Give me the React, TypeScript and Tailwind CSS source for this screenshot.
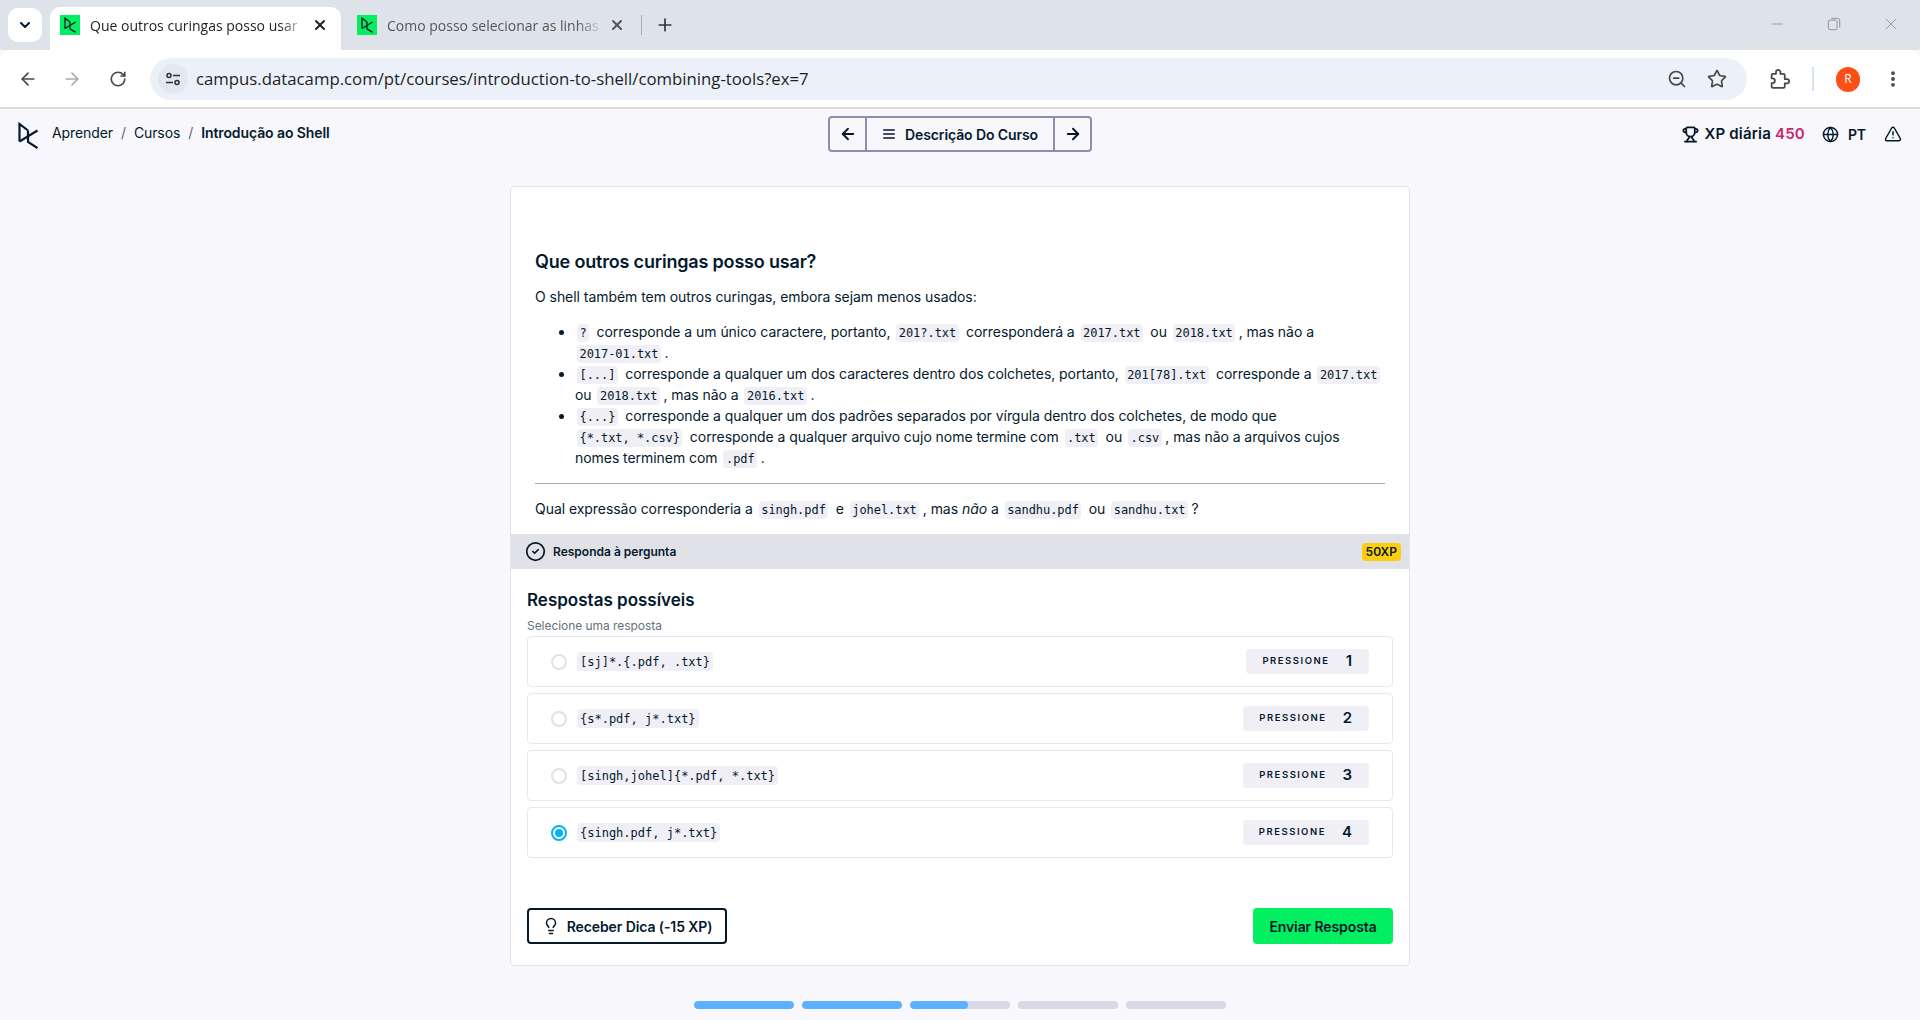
import React from "react";
import { ArrowLeft, ArrowRight, AlignJustify, Trophy, Globe, TriangleAlert, CircleCheck, Lightbulb, X, Plus, Minus, RotateCw, Star, ZoomOut, EllipsisVertical, ChevronDown } from "lucide-react";

const Logo = ({ className = "" }: { className?: string }) => (
  <svg viewBox="0 0 20 27" className={className} fill="none" stroke="currentColor" strokeWidth="2.2" strokeLinejoin="miter">
    <path d="M1.5 19.5V2l8.5 6.5" />
    <path d="M1.5 19.5 19.5 8.5" />
    <path d="M10 8.5v6M10 14.5V20l9.5 6" />
  </svg>
);

const Fav = () => (
  <div className="w-5 h-5 bg-[#03ef62] flex items-center justify-center shrink-0 text-[#05192d]">
    <Logo className="w-3 h-4" />
  </div>
);

const C = ({ children }: { children: React.ReactNode }) => (
  <code className="bg-[#efeff5] rounded-[4px] px-[2.5px] py-[2px] leading-[14px] text-[12px] text-[#05192d] font-['DejaVu_Sans_Mono',monospace] ml-[2px] mr-[3.5px] whitespace-pre">{children}</code>
);

const options = ["[sj]*.{.pdf, .txt}", "{s*.pdf, j*.txt}", "[singh,johel]{*.pdf, *.txt}", "{singh.pdf, j*.txt}"];

export default function App() {
  return (
    <div className="h-[1020px] overflow-hidden bg-[#f7f7fc] text-[#05192d] font-['Inter',sans-serif] flex flex-col">
      {/* tab strip */}
      <div className="h-[50px] bg-[#dee3ea] flex items-end shrink-0 font-['Open_Sans',sans-serif]">
        <div className="w-[34px] h-[34px] ml-2 mb-2 bg-white rounded-[10px] flex items-center justify-center"><ChevronDown size={16} strokeWidth={3} /></div>
        <div className="w-[291px] h-[43px] ml-2 bg-white rounded-t-[10px] flex items-center pl-[10px] pb-[7px]">
          <Fav />
          <span className="ml-[10px] w-[216px] overflow-hidden whitespace-nowrap text-[14px] text-[#222] [mask-image:linear-gradient(to_right,black_88%,transparent)]">Que outros curingas posso usar</span>
          <X size={16} strokeWidth={3} className="ml-[6px] text-[#222]" />
        </div>
        <div className="w-[340px] h-[43px] flex items-center pl-4 pb-[7px]">
          <Fav />
          <span className="ml-[10px] w-[216px] overflow-hidden whitespace-nowrap text-[14px] text-[#555] [mask-image:linear-gradient(to_right,black_88%,transparent)]">Como posso selecionar as linhas</span>
          <X size={16} strokeWidth={3} className="ml-[6px] text-[#555]" />
          <div className="w-px h-5 bg-[#aaa] ml-4" />
          <Plus size={20} strokeWidth={2} className="ml-[13px] text-[#333]" />
        </div>
        <div className="ml-auto flex items-center h-[50px] pb-[2px] text-[#8a8a8a]">
          <Minus size={18} strokeWidth={1} />
          <svg viewBox="0 0 16 16" className="w-[14px] h-[14px] ml-[41px]" fill="none" stroke="currentColor"><rect x="1.5" y="3.5" width="10" height="11" rx="2" /><path d="M5 1.5h7a2.5 2.5 0 0 1 2.5 2.5v8" /></svg>
          <X size={20} strokeWidth={1} className="ml-[40px] mr-[19px]" />
        </div>
      </div>
      {/* toolbar */}
      <div className="h-[59px] pt-2 pb-[7px] bg-white border-b-2 border-[#dcdcdc] flex items-center shrink-0 text-[#474747] font-['Open_Sans',sans-serif] rounded-t-[10px]">
        <ArrowLeft size={20} className="ml-[18px]" />
        <ArrowRight size={20} className="ml-6 text-[#a9a9a9]" />
        <RotateCw size={18} strokeWidth={2.2} className="ml-[27px]" />
        <div className="ml-[23px] w-[1597px] h-[42px] bg-[#ecf1f9] rounded-full flex items-center">
          <div className="ml-2 w-[30px] h-[30px] rounded-full bg-[#e3e8f0] flex flex-col items-center justify-center gap-[3px]">
            <svg viewBox="0 0 16 14" className="w-[16px] h-[14px]" fill="none" stroke="#333" strokeWidth="1.6"><circle cx="4" cy="3.5" r="2" /><path d="M8 3.5h7M1 10.5h7" /><circle cx="12" cy="10.5" r="2" /></svg>
          </div>
          <span className="ml-2 text-[16.75px] text-[#1f1f1f]">campus.datacamp.com/pt/courses/introduction-to-shell/combining-tools?ex=7</span>
          <ZoomOut size={20} className="ml-auto" />
          <Star size={20} className="ml-5 mr-5" />
        </div>
        <svg viewBox="0 0 24 24" className="ml-[22px] w-[21px] h-[21px]" fill="none" stroke="currentColor" strokeWidth="2" strokeLinejoin="round">
          <path d="M20.5 11.5H18V7a1.5 1.5 0 0 0-1.5-1.5H13V3.5a2.5 2.5 0 0 0-5 0v2H4.5A1.5 1.5 0 0 0 3 7v3.8h1a2.7 2.7 0 0 1 0 5.4H3V20a1.5 1.5 0 0 0 1.5 1.5h12A1.5 1.5 0 0 0 18 20v-3.5h2.5a2.5 2.5 0 0 0 0-5z" />
        </svg>
        <div className="ml-[22px] w-[2px] h-6 bg-[#d3e3fd]" />
        <div className="ml-[22px] w-6 h-[25px] rounded-full bg-[#fb5119] text-white text-[12px] flex items-center justify-center">R</div>
        <EllipsisVertical size={20} strokeWidth={2.6} className="ml-[23px]" />
      </div>
      {/* app header */}
      <header className="relative h-[50px] shrink-0 flex items-center px-[18px] text-[14px] pb-[3px] tracking-[-0.1px]">
        <Logo className="w-5 h-[27px] mt-[6px]" />
        <nav className="ml-[14px] flex items-center">
          <span>Aprender</span>
          <span className="mx-[8px] text-[#5d6a77]">/</span>
          <span>Cursos</span>
          <span className="mx-[8px] text-[#5d6a77]">/</span>
          <span className="font-semibold">Introdução ao Shell</span>
        </nav>
        <div className="absolute left-[828px] top-[7px] h-9 w-[264px] border-2 border-[#8a8fad] rounded-[4px] flex items-center font-semibold">
          <div className="w-[35px] h-full flex items-center justify-center"><ArrowLeft size={18} strokeWidth={2.5} /></div>
          <div className="flex-1 h-full border-x-2 border-[#8a8fad] flex items-center justify-center gap-[9px]"><AlignJustify size={14} strokeWidth={2.5} /><span>Descrição Do Curso</span></div>
          <div className="w-[35px] h-full flex items-center justify-center"><ArrowRight size={18} strokeWidth={2.5} /></div>
        </div>
        <div className="ml-auto mt-[3px] flex items-center font-semibold">
          <Trophy size={17} strokeWidth={2.5} />
          <span className="ml-[5px] text-[15px] tracking-[0.2px]">XP diária <span className="text-[#c7286f]">450</span></span>
          <Globe size={17} strokeWidth={2} className="ml-[17px]" />
          <span className="ml-[9px]">PT</span>
          <TriangleAlert size={18} strokeWidth={2} className="ml-[18px]" />
        </div>
      </header>
      {/* card */}
      <main className="w-[900px] ml-[510px] h-[780px] mt-[27px] shrink-0 bg-white border border-[#e3e3ec] rounded-[4px] flex flex-col">
        <div className="px-6 pt-[61px] text-[14px] leading-[21px] tracking-[-0.05px]">
          <h1 className="text-[18px] leading-[28px] font-semibold tracking-[-0.18px]">Que outros curingas posso usar?</h1>
          <p className="mt-[10px]">O shell também tem outros curingas, embora sejam menos usados:</p>
          <ul className="list-disc pl-10 mt-[14px]">
            <li><C>?</C> corresponde a um único caractere, portanto, <C>201?.txt</C> corresponderá a <C>2017.txt</C> ou <C>2018.txt</C>, mas não a <C>2017-01.txt</C>.</li>
            <li><C>[...]</C> corresponde a qualquer um dos caracteres dentro dos colchetes, portanto, <C>201[78].txt</C> corresponde a <C>2017.txt</C> ou <C>2018.txt</C>, mas não a <C>2016.txt</C>.</li>
            <li><C>{"{...}"}</C> corresponde a qualquer um dos padrões separados por vírgula dentro dos colchetes, de modo que <C>{"{*.txt, *.csv}"}</C> corresponde a qualquer arquivo cujo nome termine com <C>.txt</C> ou <C>.csv</C>, mas não a arquivos cujos nomes terminem com <C>.pdf</C>.</li>
          </ul>
          <hr className="mt-[15px] border-t-[1.5px] border-[#a6a6ab]" />
          <p className="mt-[14px]">Qual expressão corresponderia a <C>singh.pdf</C> e <C>johel.txt</C>, mas <em>não</em> a <C>sandhu.pdf</C> ou <C>sandhu.txt</C>?</p>
        </div>
        <div className="mt-[15px] h-[35px] bg-[#e1e2e7] flex items-center pl-[14px] pr-2 text-[12px] font-semibold">
          <CircleCheck size={21} strokeWidth={2} />
          <span className="ml-[7px]">Responda à pergunta</span>
          <span className="ml-auto h-[18px] px-[4px] rounded-[4px] bg-[#fcce0d] flex items-center">50XP</span>
        </div>
        <div className="px-4 flex-1 flex flex-col">
          <h2 className="mt-[17px] text-[17px] leading-[28px] font-semibold">Respostas possíveis</h2>
          <p className="mt-[3px] text-[12px] leading-[18px] tracking-[-0.05px] text-[#65717e]">Selecione uma resposta</p>
          <div className="mt-px flex flex-col gap-[6px]">
            {options.map((o, i) => (
              <div key={o} className="h-[51px] border border-[#e8e8f0] rounded-[4px] flex items-center pl-[23px] pr-[23px]">
                <div className={i === 3 ? "w-4 h-4 rounded-full border-2 border-[#03b4f5] flex items-center justify-center" : "w-4 h-4 rounded-full border-2 border-[#e5e1da]"}>
                  {i === 3 && <div className="w-2 h-2 rounded-full bg-[#03b4f5]" />}
                </div>
                <code className="ml-[10px] bg-[#efeff5] rounded-[4px] px-[3px] h-[19px] flex items-center text-[12px] font-['DejaVu_Sans_Mono',monospace] whitespace-pre">{o}</code>
                <div className="ml-auto h-[25px] pl-4 pr-[17px] rounded-[4px] bg-[#efeff5] flex items-center font-semibold">
                  <span className="text-[9.5px] tracking-[1.55px]">PRESSIONE</span>
                  <span className="ml-4 text-[15px]">{i + 1}</span>
                </div>
              </div>
            ))}
          </div>
          <div className="mt-[50px] flex justify-between text-[14px] font-semibold tracking-[-0.1px]">
            <button className="h-9 w-[200px] border-2 border-[#05192d] rounded-[4px] flex items-center justify-center gap-[7px]"><Lightbulb size={18} strokeWidth={2} />Receber Dica (-15 XP)</button>
            <button className="h-9 w-[140px] bg-[#03ef62] rounded-[4px]">Enviar Resposta</button>
          </div>
        </div>
      </main>
      {/* progress */}
      <div className="mt-[35px] flex justify-center gap-2">
        {[100, 100, 58, 0, 0].map((p, i) => (
          <div key={i} className="w-[100px] h-2 rounded-full bg-[#d9d9e6] overflow-hidden">
            <div className="h-full rounded-full bg-[#5eb1ff]" style={{ width: `${p}%` }} />
          </div>
        ))}
      </div>
    </div>
  );
}
